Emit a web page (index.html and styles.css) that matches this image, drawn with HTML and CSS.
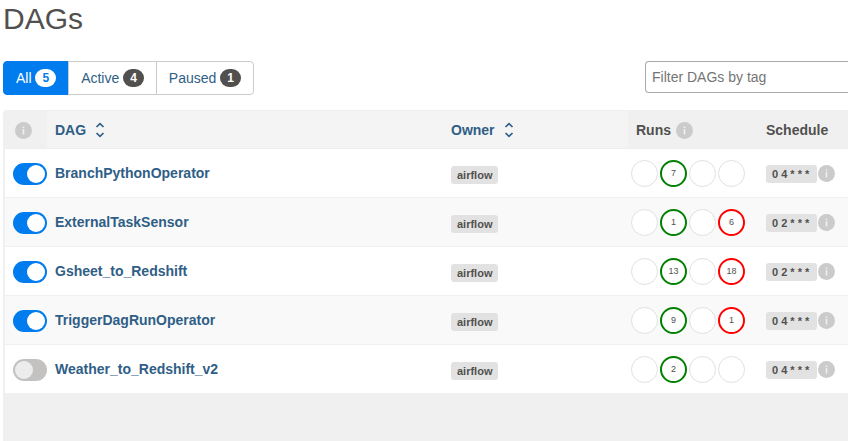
FILE: index.html
```html
<!DOCTYPE html>
<html lang="en">
<head>
	<meta charset="UTF-8">
	<title>DAGs</title>
	<link rel="stylesheet" href="styles.css">
</head>
<body>
	<h1>DAGs</h1>
	<div class="toolbar">
		<div class="btn-group">
			<button type="button" class="btn active">All <span class="badge">5</span></button>
			<button type="button" class="btn">Active <span class="badge">4</span></button>
			<button type="button" class="btn">Paused <span class="badge">1</span></button>
		</div>
		<input type="text" class="filter" placeholder="Filter DAGs by tag" aria-label="Filter DAGs by tag">
	</div>
	<div class="table-wrap">
		<table id="dags">
			<thead>
				<tr>
					<th class="col-toggle"><span class="info"><svg viewBox="0 0 17 17"><use href="#info"/></svg></span></th>
					<th class="col-dag sortable"><a href="#">DAG<svg class="sort" viewBox="0 0 10 16"><use href="#sort"/></svg></a></th>
					<th class="col-owner sortable"><a href="#">Owner<svg class="sort" viewBox="0 0 10 16"><use href="#sort"/></svg></a></th>
					<th class="col-runs">Runs <span class="info"><svg viewBox="0 0 17 17"><use href="#info"/></svg></span></th>
					<th class="col-schedule">Schedule</th>
				</tr>
			</thead>
			<tbody id="rows"></tbody>
		</table>
	</div>

	<svg class="defs" width="0" height="0">
		<symbol id="info" viewBox="0 0 17 17">
			<circle cx="8.5" cy="8.5" r="8.5" fill="#cbcbcb"/>
			<path d="M7.700 4.500h1.600v1.500H7.700zM7.700 7h1.600v5.500H7.700z" fill="#f0f0f0"/>
		</symbol>
		<symbol id="sort" viewBox="0 0 10 16">
			<path d="M1.500 5L5 1.700 8.500 5M1.500 11L5 14.300 8.500 11" fill="none" stroke="#2f5e86" stroke-width="1.700"/>
		</symbol>
	</svg>

	<script>
	// runs: counts in the order of the states below
	var dags = [
		{name: 'BranchPythonOperator', on: true, runs: ['', 7, '', ''], schedule: '0 4 * * *'},
		{name: 'ExternalTaskSensor', on: true, runs: ['', 1, '', 6], schedule: '0 2 * * *'},
		{name: 'Gsheet_to_Redshift', on: true, runs: ['', 13, '', 18], schedule: '0 2 * * *'},
		{name: 'TriggerDagRunOperator', on: true, runs: ['', 9, '', 1], schedule: '0 4 * * *'},
		{name: 'Weather_to_Redshift_v2', on: false, runs: ['', 2, '', ''], schedule: '0 4 * * *'}
	];
	var states = ['queued', 'success', 'running', 'failed'];
	var html = '';
	dags.forEach(function (dag) {
		var runs = dag.runs.map(function (n, i) {
			return '<span class="run ' + (n === '' ? '' : states[i]) + '">' + n + '</span>';
		}).join('');
		html += '<tr>' +
			'<td><input type="checkbox" class="switch" aria-label="' + dag.name + '"' + (dag.on ? ' checked' : '') + '></td>' +
			'<td><a class="name" href="#">' + dag.name + '</a></td>' +
			'<td><a class="label" href="#">airflow</a></td>' +
			'<td><div class="runs">' + runs + '</div></td>' +
			'<td><div class="schedule"><a class="label cron" href="#">' + dag.schedule + '</a>' +
			'<span class="info"><svg viewBox="0 0 17 17"><use href="#info"/></svg></span></div></td>' +
			'</tr>';
	});
	document.getElementById('rows').innerHTML = html;
	</script>
</body>
</html>
```
FILE: styles.css
```css
*{
	box-sizing: border-box;
}
body{
	margin: 0;
	padding-left: 3px;
	background: #fff;
	color: #51504f;
	font-family: "Liberation Sans", Arial, sans-serif;
	font-size: 14px;
	line-height: 20px;
}
h1{
	margin: 0 0 23px;
	font-size: 30px;
	font-weight: normal;
	line-height: 38px;
}
a{
	color: #2f5e86;
	text-decoration: none;
}
.defs{
	display: block;
}
.toolbar{
	display: flex;
	justify-content: space-between;
	margin-bottom: 15px;
}
.btn-group{
	display: flex;
}
.btn{
	height: 34px;
	margin: 0 0 0 -1px;
	padding: 0 12px;
	border: 1px solid #cbcbcb;
	background: #fff;
	color: #2f5e86;
	font: inherit;
}
.btn:first-child{
	margin-left: 0;
	border-radius: 4px 0 0 4px;
}
.btn:last-child{
	border-radius: 0 4px 4px 0;
}
.btn.active{
	border-color: #017cee;
	background: #017cee;
	color: #fff;
}
.badge{
	display: inline-block;
	padding: 3px 7px;
	border-radius: 10px;
	background: #51504f;
	color: #fff;
	font-size: 12px;
	font-weight: bold;
	line-height: 12px;
	vertical-align: 1px;
}
.active .badge{
	background: #fff;
	color: #017cee;
}
.filter{
	width: 203px;
	height: 32px;
	padding: 0 6px;
	border: 1px solid #aaa;
	border-right: none;
	border-radius: 4px 0 0 4px;
	background: #fff;
	font: inherit;
}
.filter::placeholder{
	color: #757575;
}
.table-wrap{
	padding: 0 0 48px 2px;
	background: #f0f0f0;
	border-radius: 4px 0 0 0;
}
table{
	width: 100%;
	table-layout: fixed;
	border-collapse: collapse;
}
th{
	height: 38px;
	padding: 0 8px;
	border-top: 1px solid #f0f0f0;
	border-bottom: 1px solid #eee;
	background: #f0f0f0;
	text-align: left;
}
th.sortable{
	background: #f4f4f4;
}
.col-toggle{
	width: 42px;
}
.col-owner{
	width: 185px;
}
.col-runs{
	width: 130px;
}
.col-schedule{
	width: 90px;
}
td{
	height: 49px;
	padding: 0 8px;
	border-bottom: 1px solid #f0f0f0;
	background: #fff;
}
tbody tr:nth-child(even) td{
	background: #f9f9f9;
}
.sort{
	width: 10px;
	height: 16px;
	margin-left: 9px;
	vertical-align: -3px;
}
.info{
	display: inline-block;
	width: 17px;
	height: 17px;
	vertical-align: -4px;
}
.info svg{
	display: block;
	width: 17px;
	height: 17px;
}
.col-toggle .info{
	margin-left: 2px;
}
.col-runs .info{
	margin-left: 1px;
}
.name{
	font-weight: bold;
}
.switch{
	display: block;
	appearance: none;
	width: 34px;
	height: 22px;
	margin: 1px 0 0;
	padding: 2px;
	border-radius: 11px;
	background: #c4c2c1;
}
.switch::before{
	content: "";
	display: block;
	width: 18px;
	height: 18px;
	border-radius: 50%;
	background: #edecec;
}
.switch:checked{
	background: #017cee;
}
.switch:checked::before{
	margin-left: 12px;
	background: #fff;
}
.label{
	display: inline-block;
	margin-top: 2px;
	padding: 3px 6px;
	border-radius: 3px;
	background: #e2e2e2;
	color: #51504f;
	font-size: 11px;
	font-weight: bold;
	line-height: 12px;
	vertical-align: middle;
}
.cron{
	padding-right: 8px;
}
.runs{
	display: flex;
	gap: 2px;
	margin-left: -5px;
}
.run{
	width: 27px;
	height: 27px;
	border: 1px solid #e0e0e0;
	border-radius: 50%;
	background: #fff;
	font-size: 9px;
	line-height: 25px;
	text-align: center;
}
.success,
.failed{
	border-width: 2px;
	line-height: 23px;
}
.success{
	border-color: #008000;
}
.failed{
	border-color: #f00;
}
.schedule{
	display: flex;
	align-items: center;
	gap: 1px;
}
```
